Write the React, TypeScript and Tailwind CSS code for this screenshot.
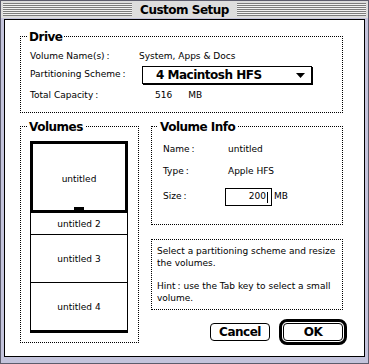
import React from "react";

function Colon() {
  return <span className="ml-[2px]">:</span>;
}

function Group({
  title,
  className,
  children,
}: {
  title: string;
  className: string;
  children?: React.ReactNode;
}) {
  return (
    <div className={"relative border border-dotted border-black " + className}>
      <div className="absolute left-[6px] top-[-7px] bg-white px-[2px] font-bold text-[12px] tracking-[-0.5px] leading-[14px]">
        {title}
      </div>
      {children}
    </div>
  );
}

const stripes =
  "flex-1 bg-[repeating-linear-gradient(to_bottom,#7c7c7c_0px,#7c7c7c_1px,#f2f2f2_1px,#f2f2f2_2px)]";

export default function App() {
  return (
    <div className="w-[369px] h-[364px] bg-[#c4c4dc] border border-[#5c5c6c] flex flex-col [font-family:'DejaVu_Sans',sans-serif] text-[9px] text-black">
      {/* Title bar */}
      <div className="h-[17px] bg-[#dddddd] flex items-stretch px-[2px] py-[2px]">
        <div className={stripes} />
        <div className="px-[8px] flex items-center font-bold text-[12px] tracking-[-0.5px] leading-none">
          Custom Setup
        </div>
        <div className={stripes} />
      </div>

      {/* Content */}
      <div className="flex-1 ml-[3px] mr-[3px] mt-[1px] mb-[6px] border border-black bg-white pl-[15px] pt-[16px]">
        {/* Drive */}
        <Group title="Drive" className="w-[323px] h-[77px] pl-[9px] pt-[11px]">
          <div className="h-[18px] flex items-center">
            <span className="w-[109px]">
              Volume Name(s)
              <Colon />
            </span>
            <span>System, Apps &amp; Docs</span>
          </div>
          <div className="h-[18px] flex items-center">
            <span className="w-[112px]">
              Partitioning Scheme
              <Colon />
            </span>
            <div className="w-[170px] h-[18px] border border-black shadow-[1px_1px_0_#000] flex items-center justify-between pl-[13px] pr-[6px] font-bold text-[12px] tracking-[-0.5px]">
              <span>4 Macintosh HFS</span>
              <svg width="9" height="5" viewBox="0 0 9 5">
                <polygon points="0,0 9,0 4.5,5" fill="#000" />
              </svg>
            </div>
          </div>
          <div className="h-[18px] mt-[3px] flex items-center">
            <span className="w-[109px]">
              Total Capacity
              <Colon />
            </span>
            <span className="ml-[16px]">516</span>
            <span className="ml-[16px]">MB</span>
          </div>
        </Group>

        <div className="flex mt-[13px]">
          {/* Volumes */}
          <Group title="Volumes" className="w-[119px] h-[217px] pl-[9px] pt-[14px]">
            <div className="w-[98px] flex flex-col">
              <div className="relative h-[72px] border-[3px] border-black flex items-center justify-center pt-[5px]">
                untitled
                <div className="absolute bottom-0 left-[41px] w-[10px] h-[3px] bg-black" />
              </div>
              <div className="h-[22px] border-x border-b border-black flex items-center justify-center pt-[2px]">
                untitled 2
              </div>
              <div className="h-[48px] border-x border-b border-black flex items-center justify-center pt-[2px]">
                untitled 3
              </div>
              <div className="h-[50px] border-x border-b-[3px] border-black flex items-center justify-center pt-[2px]">
                untitled 4
              </div>
            </div>
          </Group>

          {/* Right column */}
          <div className="ml-[12px] w-[192px] flex flex-col">
            <Group title="Volume Info" className="h-[99px] pl-[11px] pt-[14px]">
              <div className="h-[18px] flex items-center">
                <span className="w-[65px]">
                  Name
                  <Colon />
                </span>
                <span>untitled</span>
              </div>
              <div className="h-[18px] mt-[4px] flex items-center">
                <span className="w-[65px]">
                  Type
                  <Colon />
                </span>
                <span>Apple HFS</span>
              </div>
              <div className="h-[18px] mt-[7px] flex items-center">
                <span className="w-[62px]">
                  Size
                  <Colon />
                </span>
                <div className="w-[47px] h-[18px] border border-black flex items-center justify-end pr-[3px]">
                  <span>200</span>
                  <span className="ml-[1px] w-[1px] h-[11px] bg-black" />
                </div>
                <span className="ml-[2px]">MB</span>
              </div>
            </Group>

            <div className="mt-[14px] h-[71px] border border-dotted border-black pl-[5px] pt-[5px] leading-[12px]">
              <p>
                Select a partitioning scheme and resize
                <br />
                the volumes.
              </p>
              <p className="mt-[11px]">
                Hint
                <Colon /> use the Tab key to select a small
                <br />
                volume.
              </p>
            </div>

            <div className="mt-[9px] -mr-[4px] flex justify-end items-center gap-[9px] font-bold text-[12px] tracking-[-0.5px]">
              <div className="w-[60px] h-[18px] border border-black rounded-[4px] flex items-center justify-center">
                Cancel
              </div>
              <div className="w-[68px] h-[26px] border-[3px] border-black rounded-[8px] p-[1px]">
                <div className="w-full h-full border border-black rounded-[4px] flex items-center justify-center">
                  OK
                </div>
              </div>
            </div>
          </div>
        </div>
      </div>
    </div>
  );
}
